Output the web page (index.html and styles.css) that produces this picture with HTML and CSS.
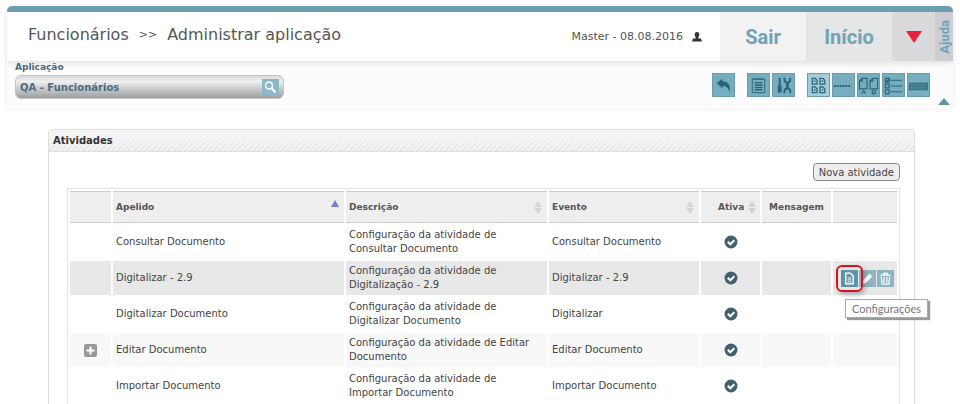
FILE: index.html
```html
<!DOCTYPE html>
<html lang="pt">
    <head>
        <meta charset="utf-8">
        <title>Administrar aplicação</title>
        <link rel="stylesheet" href="styles.css">
    </head>
    <body>
        <header class="topbar">
            <h1 class="title">Funcionários <span class="sep">&gt;&gt;</span> Administrar aplicação</h1>
            <div class="user">
                Master - 08.08.2016
                <svg width="10" height="10" viewBox="0 0 10 10"><path fill="#333" d="M5 0c1.600 0 2.300 1 2.300 2.400 0 1.300-.6 2.200-1 2.800v1.300H9L10 9.500H0L1 6.500h2.700V5.200c-.4-.6-1-1.500-1-2.800C2.700 1 3.400 0 5 0z"/></svg>
            </div>
            <nav class="menu">
                <a class="menu-item" href="#">Sair</a>
                <a class="menu-item home" href="#">Início</a>
                <a class="menu-item more" href="#" aria-label="Mais">
                    <svg width="16" height="12" viewBox="0 0 16 12"><path fill="#e8203c" d="M0 0h16L8 12z"/></svg>
                </a>
                <a class="menu-item help" href="#"><span>Ajuda</span></a>
            </nav>
        </header>

        <section class="toolbar">
            <div class="app">
                <label for="app">Aplicação</label>
                <div class="app-box">
                    <input type="text" id="app" value="QA - Funcionários">
                    <button class="search" aria-label="Pesquisar">
                        <svg width="17" height="17" viewBox="0 0 17 17" fill="none" stroke="#fff"><circle cx="7" cy="6.500" r="3.500" stroke-width="1.500"/><path d="M9.500 9l4 4.500" stroke-width="2.200"/></svg>
                    </button>
                </div>
            </div>
            <div class="tools">
                <div class="group">
                    <button class="tool" aria-label="Voltar">
                        <svg viewBox="0 0 24 24"><path fill="#2b6479" d="M5 9.500L11 5v2.500c6 0 8.500 4 7.500 12-1-4.500-3.500-7-7.500-7V15z"/></svg>
                    </button>
                </div>
                <div class="group">
                    <button class="tool" aria-label="Lista">
                        <svg viewBox="0 0 24 24" fill="none" stroke="#2b6479"><path d="M5.500 5.500h13v14h-13z"/><path d="M6 5h12" stroke-width="2" stroke-dasharray="1 1"/><path d="M8 9h8M8 11.500h8M8 14h8M8 16.500h8" stroke-width="1.500"/></svg>
                    </button>
                    <button class="tool" aria-label="Ferramentas">
                        <svg viewBox="0 0 24 24" fill="none" stroke="#2b6479"><path d="M8 4v9" stroke-width="2"/><path d="M8 12v7.500" stroke-width="4"/><path d="M16 8v8" stroke-width="3"/><path d="M13 4v2q0 3 3 3t3-3V4M13 20v-2q0-3 3-3t3 3v2" stroke-width="2"/></svg>
                    </button>
                </div>
                <div class="group">
                    <button class="tool light" aria-label="Miniaturas">
                        <svg viewBox="0 0 24 24" fill="none" stroke="#2b6479" stroke-width="1.300"><path d="M5.500 4.500h3l2 2v4h-5zM13.500 4.500h3l2 2v4h-5zM5.500 13.500h3l2 2v4h-5zM13.500 13.500h3l2 2v4h-5z"/><path d="M7 7.500h2M15 7.500h2M7 16.500h2M15 16.500h2"/></svg>
                    </button>
                    <button class="tool" aria-label="Separador">
                        <svg viewBox="0 0 24 24"><path d="M2 12.500h17" stroke="#2b6479" stroke-width="2" stroke-dasharray="2 1"/></svg>
                    </button>
                    <button class="tool" aria-label="Comparar">
                        <svg viewBox="0 0 24 24" fill="none" stroke="#2b6479" stroke-width="1.200"><path d="M5.500 4.500h5v11h-8v-8zM16.500 4.500h5v11h-8v-8zM2.500 7.500h3v-3M13.500 7.500h3v-3"/><path d="M5 20.500l2-3 2 3M16 17.500h3v3h-3z"/></svg>
                    </button>
                    <button class="tool" aria-label="Campos">
                        <svg viewBox="0 0 24 24" fill="none" stroke="#2b6479" stroke-width="1.200"><path d="M3.500 4.500h4v4h-4zM3.500 10.500h4v4h-4zM3.500 16.500h4v4h-4zM4 6l1.500 2L8 4M9 6.500h12M9 12.500h12M9 18.500h12"/></svg>
                    </button>
                    <button class="tool" aria-label="Teclado">
                        <svg viewBox="0 0 24 24"><path fill="#39758a" d="M2 9h20v8H2z"/><path d="M4 11.500h16M4 14.500h16" stroke="#6fa3b4" stroke-dasharray="2 1"/></svg>
                    </button>
                </div>
                <button class="collapse" aria-label="Recolher">
                    <svg width="12" height="7" viewBox="0 0 12 7"><path fill="#5f93a6" d="M6 0l6 7H0z"/></svg>
                </button>
            </div>
        </section>

        <main class="panel">
            <h2 class="panel-title">Atividades</h2>
            <div class="panel-body">
                <button class="new">Nova atividade</button>
                <table class="grid">
                    <colgroup>
                        <col class="c-expand"><col class="c-name"><col><col class="c-event"><col class="c-active"><col class="c-message"><col class="c-actions">
                    </colgroup>
                    <thead>
                        <tr>
                            <th></th>
                            <th><div class="head">Apelido <svg class="asc" width="8" height="7" viewBox="0 0 8 7"><path fill="#7d7cc4" d="M4 0l4 7H0z"/></svg></div></th>
                            <th><div class="head">Descrição <svg width="8" height="13" viewBox="0 0 8 13"><path fill="#d3d3d3" d="M4 0l4 6H0zM0 7h8l-4 6z"/></svg></div></th>
                            <th><div class="head">Evento <svg width="8" height="13" viewBox="0 0 8 13"><path fill="#d3d3d3" d="M4 0l4 6H0zM0 7h8l-4 6z"/></svg></div></th>
                            <th><div class="head active">Ativa <svg width="8" height="13" viewBox="0 0 8 13"><path fill="#d3d3d3" d="M4 0l4 6H0zM0 7h8l-4 6z"/></svg></div></th>
                            <th class="center">Mensagem</th>
                            <th></th>
                        </tr>
                    </thead>
                    <tbody>
                        <tr>
                            <td></td>
                            <td>Consultar Documento</td>
                            <td>Configuração da atividade de Consultar Documento</td>
                            <td>Consultar Documento</td>
                            <td class="center"><svg class="check" viewBox="0 0 14 14"><circle cx="7" cy="7" r="6.500"/><path d="M3.800 6.800l2.500 2.500 4-4"/></svg></td>
                            <td></td>
                            <td></td>
                        </tr>
                        <tr class="selected">
                            <td></td>
                            <td>Digitalizar - 2.9</td>
                            <td>Configuração da atividade de Digitalização - 2.9</td>
                            <td>Digitalizar - 2.9</td>
                            <td class="center"><svg class="check" viewBox="0 0 14 14"><circle cx="7" cy="7" r="6.500"/><path d="M3.800 6.800l2.500 2.500 4-4"/></svg></td>
                            <td></td>
                            <td class="buttons">
                                <div class="actions">
                                    <button class="action config" aria-label="Configurações">
                                        <svg viewBox="0 0 18 18" fill="none" stroke="#fff"><path d="M5 3.500h5l3 3v8H5z" stroke-width="1.500"/><path d="M7 8.500h4M7 10.500h4M7 12.500h4"/></svg>
                                    </button>
                                    <button class="action" aria-label="Editar">
                                        <svg viewBox="0 0 18 18"><path fill="#fff" d="M3 15l1-4 7-7 3 3-7 7z"/></svg>
                                    </button>
                                    <button class="action" aria-label="Eliminar">
                                        <svg viewBox="0 0 18 18" fill="none" stroke="#fff" stroke-width="1.300"><path d="M3.500 5.500h11M7 5V3.500h4V5M4.500 7l1 8h7l1-8M7.500 7.500v6M10.500 7.500v6"/></svg>
                                    </button>
                                    <span class="tooltip">Configurações</span>
                                </div>
                            </td>
                        </tr>
                        <tr>
                            <td></td>
                            <td>Digitalizar Documento</td>
                            <td>Configuração da atividade de Digitalizar Documento</td>
                            <td>Digitalizar</td>
                            <td class="center"><svg class="check" viewBox="0 0 14 14"><circle cx="7" cy="7" r="6.500"/><path d="M3.800 6.800l2.500 2.500 4-4"/></svg></td>
                            <td></td>
                            <td></td>
                        </tr>
                        <tr class="even">
                            <td class="center"><button class="expand" aria-label="Expandir"><svg width="11" height="11" viewBox="0 0 11 11"><path fill="#fff" d="M4.500 1.500h2v3h3v2h-3v3h-2v-3h-3v-2h3z"/></svg></button></td>
                            <td>Editar Documento</td>
                            <td>Configuração da atividade de Editar Documento</td>
                            <td>Editar Documento</td>
                            <td class="center"><svg class="check" viewBox="0 0 14 14"><circle cx="7" cy="7" r="6.500"/><path d="M3.800 6.800l2.500 2.500 4-4"/></svg></td>
                            <td></td>
                            <td></td>
                        </tr>
                        <tr>
                            <td></td>
                            <td>Importar Documento</td>
                            <td>Configuração da atividade de Importar Documento</td>
                            <td>Importar Documento</td>
                            <td class="center"><svg class="check" viewBox="0 0 14 14"><circle cx="7" cy="7" r="6.500"/><path d="M3.800 6.800l2.500 2.500 4-4"/></svg></td>
                            <td></td>
                            <td></td>
                        </tr>
                    </tbody>
                </table>
            </div>
        </main>
    </body>
</html>
```
FILE: styles.css
```css
*{
    box-sizing: border-box;
}

html{
    height: 100%;
}

body{
    height: 100%;
    margin: 0;
    padding: 6px 7px 0;
    overflow: hidden;
    background-color: #fff;
    color: #444;
    font-family: "DejaVu Sans", Verdana, sans-serif;
    font-size: 10px;
}

button{
    margin: 0;
    padding: 0;
    border: none;
    font-family: inherit;
    cursor: pointer;
}

svg{
    display: block;
}

/* header */
.topbar{
    position: relative;
    display: flex;
    align-items: center;
    height: 55px;
    border-top: 6px solid #6c9eb1;
    border-radius: 5px 5px 0 0;
    background-color: #fff;
    box-shadow: 0 2px 6px rgba(0, 0, 0, 0.12);
}

.title{
    display: flex;
    align-items: center;
    gap: 10px;
    flex: 1;
    margin: 0;
    padding: 0 0 5px 21px;
    font-size: 16px;
    font-weight: normal;
    color: #555;
}

.sep{
    font-size: 11px;
}

.user{
    display: flex;
    align-items: center;
    gap: 9px;
    padding-right: 18px;
    font-size: 11px;
    color: #555;
}

.menu{
    display: flex;
    align-self: stretch;
}

.menu-item{
    display: flex;
    align-items: center;
    justify-content: center;
    width: 86px;
    background-color: #f2f2f3;
    color: #6fa3b5;
    font-family: Roboto, sans-serif;
    font-size: 20px;
    font-weight: bold;
    text-decoration: none;
}

.home{
    background-color: #e5e6e6;
}

.more{
    width: 43px;
    background-color: #dadadc;
}

.help{
    width: 18px;
    background-color: #cdced1;
    font-size: 13px;
}

.help span{
    writing-mode: vertical-rl;
    transform: rotate(180deg);
}

/* toolbar */
.toolbar{
    display: flex;
    justify-content: space-between;
    height: 48px;
    padding-left: 8px;
    border-radius: 0 0 5px 5px;
    background-color: #fcfcfc;
    box-shadow: 0 0 4px rgba(0, 0, 0, 0.1);
}

.app{
    display: flex;
    flex-direction: column;
    gap: 2px;
    width: 269px;
    color: #4b6b80;
    font-size: 9px;
    font-weight: bold;
}

.app label{
    line-height: 12px;
}

.app-box{
    display: flex;
    align-items: center;
    height: 24px;
    padding: 0 4px;
    border-radius: 6px;
    background: linear-gradient(#d8dadc, #eeeff0 25%, #d2d3d4 50%, #9c9e9f);
    border: 1px solid #c3c5c7;
}

.app-box input{
    flex: 1;
    min-width: 0;
    padding: 0;
    border: none;
    background: none;
    color: #4b6b80;
    font: bold 10px "DejaVu Sans", Verdana, sans-serif;
}

.search{
    background-color: #8bb9c7;
}

.tools{
    display: flex;
    gap: 12px;
    padding: 12px 3px 0 0;
}

.group{
    display: flex;
    gap: 2px;
}

.tool{
    width: 23px;
    height: 24px;
    background-color: #76aec0;
    box-shadow: inset 0 0 0 1px #6c9bab;
}

.light{
    background-color: #a3ccd8;
}

.collapse{
    align-self: flex-end;
    margin: 0 0 4px -4px;
    background: none;
}

/* activities */
.panel{
    margin: 20px 38px 0 41px;
    border: 1px solid #ddd;
    border-radius: 4px;
}

.panel-title{
    margin: 0;
    padding: 0 4px;
    border-bottom: 1px solid #ddd;
    border-radius: 4px 4px 0 0;
    background: linear-gradient(#f4f4f4 30%, rgba(244, 244, 244, 0)), repeating-linear-gradient(135deg, #f4f4f4 0 2px, #e6e6e6 2px 4px);
    color: #333;
    font-size: 10px;
    line-height: 21px;
}

.panel-body{
    display: flex;
    flex-direction: column;
    gap: 7px;
    padding: 11px 14px 20px 18px;
}

.new{
    align-self: flex-end;
    height: 18px;
    padding: 0 5px;
    border: 1px solid #888;
    border-radius: 4px;
    background-color: #eee;
    color: #444;
    font-size: 10px;
}

.grid{
    width: 100%;
    table-layout: fixed;
    border: 1px solid #e2e2e2;
    border-spacing: 2px;
    line-height: 14px;
}

.c-expand{
    width: 41px;
}

.c-name{
    width: 231px;
}

.c-event{
    width: 150px;
}

.c-active{
    width: 59px;
}

.c-message{
    width: 69px;
}

.c-actions{
    width: 64px;
}

th{
    height: 32px;
    padding: 0 3px;
    border-top: 1px solid #ccc;
    border-bottom: 1px solid #ccc;
    background-color: #eee;
    color: #555;
    font-size: 9px;
    text-align: left;
}

td{
    height: 34px;
    padding: 3px 12px 3px 3px;
}

.head{
    display: flex;
    align-items: center;
    justify-content: space-between;
    padding-right: 2px;
}

.head.active{
    padding: 0 1px 0 14px;
}

.asc{
    margin-bottom: 7px;
}

th.center,
td.center{
    padding: 3px;
    text-align: center;
}

td.buttons{
    padding: 3px;
}

.selected td{
    background-color: #e8e8e8;
}

.even td{
    background-color: #f8f8f8;
}

.check{
    width: 14px;
    height: 14px;
    margin: 0 auto;
    fill: #43606f;
}

.check path{
    fill: none;
    stroke: #fff;
    stroke-width: 2;
}

.expand{
    width: 13px;
    height: 13px;
    padding: 1px;
    border-radius: 2px;
    background-color: #999;
    vertical-align: middle;
}

.actions{
    position: relative;
    display: flex;
    justify-content: flex-end;
    gap: 1px;
}

.action{
    width: 17px;
    height: 17px;
    background-color: #8db4c0;
}

.config{
    position: relative;
    background-color: #5f93a6;
    z-index: 1;
}

/* red frame round the hovered button */
.config::after{
    content: "";
    position: absolute;
    inset: -5px;
    border: 2px solid #d9121f;
    border-radius: 6px;
    box-shadow: 2px 3px 5px rgba(0, 0, 0, 0.25);
}

.tooltip{
    position: absolute;
    top: 29px;
    left: 9px;
    padding: 0 6px;
    border: 1px solid #aaa;
    background-color: #fff;
    box-shadow: 2px 2px 1px #999;
    color: #777;
    font-family: Lato, sans-serif;
    font-size: 11px;
    line-height: 17px;
    z-index: 2;
}
```
